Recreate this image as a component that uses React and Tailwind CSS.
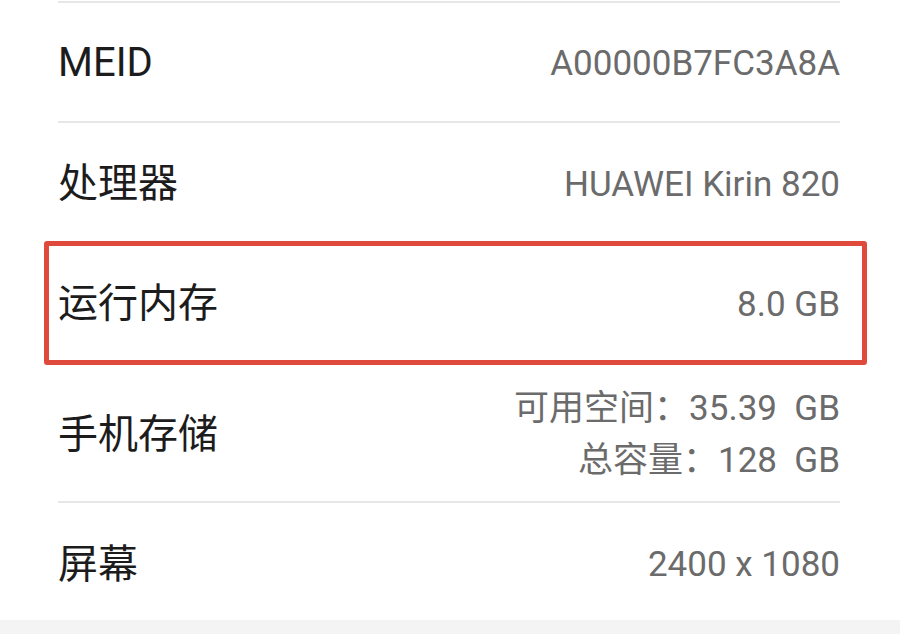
export default function App() {
  const label = "text-[40px] leading-none text-[#1c1c1c]";
  const value = "text-[35px] leading-none text-[#6b6b6b]";
  return (
    <div
      className="relative w-[900px] h-[634px] bg-white overflow-hidden"
      style={{ fontFamily: 'Roboto, "Noto Sans CJK SC", sans-serif' }}
    >
      <div className="h-[1px]" />
      <div className="ml-[58px] w-[782px] border-t-2 border-[#e6e6e6]">
        <div className="h-[120px] pt-[2px] flex items-center justify-between border-b-2 border-[#e6e6e6]">
          <span className={label}>MEID</span>
          <span className={value}>A00000B7FC3A8A</span>
        </div>
        <div className="h-[120px] pt-[4px] flex items-center justify-between border-b-2 border-[#e6e6e6]">
          <span className={label}>处理器</span>
          <span className={value}>HUAWEI Kirin 820</span>
        </div>
        <div className="h-[120px] pt-[4px] flex items-center justify-between border-b-2 border-[#e6e6e6]">
          <span className={label}>运行内存</span>
          <span className={value}>8.0 GB</span>
        </div>
        <div className="h-[140px] pt-[6px] flex items-center justify-between border-b-2 border-[#e6e6e6]">
          <span className={label}>手机存储</span>
          <div className="flex flex-col items-end">
            <span className="text-[35px] leading-[52px] text-[#6b6b6b] whitespace-pre">可用空间：35.39  GB</span>
            <span className="text-[35px] leading-[52px] text-[#6b6b6b] whitespace-pre">总容量：128  GB</span>
          </div>
        </div>
        <div className="h-[117px] pt-[6px] flex items-center justify-between">
          <span className={label}>屏幕</span>
          <span className={value}>2400 x 1080</span>
        </div>
      </div>
      <div className="h-[20px] bg-[#f4f4f4]" />
      <div className="absolute left-[44px] top-[241px] w-[823px] h-[124px] border-[5px] border-[#e04a3c] rounded-[3px]" />
    </div>
  );
}
